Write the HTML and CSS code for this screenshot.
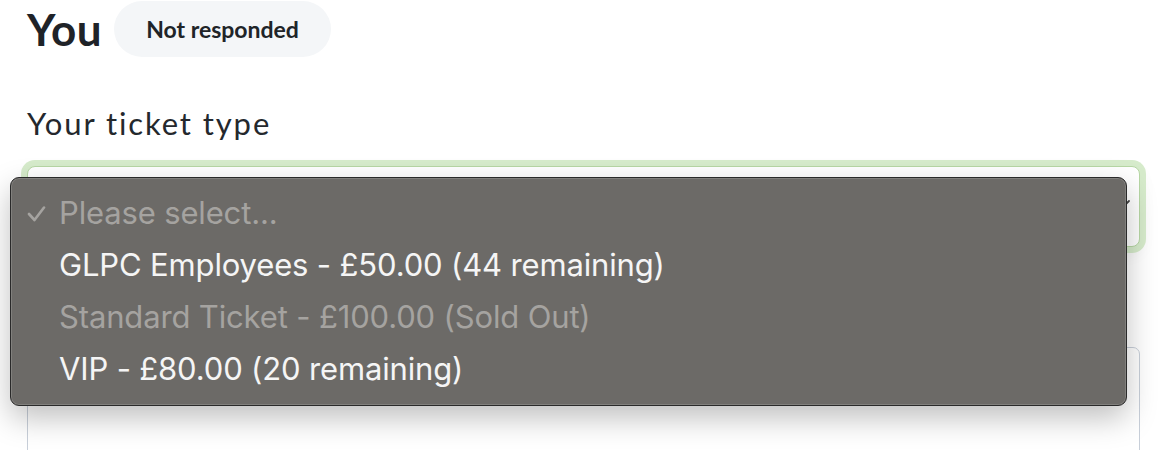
FILE: index.html
```html
<!DOCTYPE html>
<html lang="en">
<head>
<meta charset="utf-8">
<title>Ticket</title>
<link rel="stylesheet" href="styles.css">
</head>
<body>
<div class="page">
  <div class="header">
    <h1 class="name">You</h1>
    <span class="badge">Not responded</span>
  </div>
  <label class="field-label">Your ticket type</label>
  <div class="select-wrap">
    <div class="select">
      <svg class="chevron" width="14" height="10" viewBox="0 0 14 10"><path d="M2 2 L7 7 L12 2" fill="none" stroke="#444" stroke-width="1.8" stroke-linecap="round"/></svg>
    </div>
    <div class="menu">
      <div class="opt disabled"><svg class="check" width="20" height="16" viewBox="0 0 20 16"><path d="M2 8 L7.5 14 L17 1.5" fill="none" stroke="#a5a3a0" stroke-width="2.6" stroke-linecap="round" stroke-linejoin="round"/></svg>Please select...</div>
      <div class="opt">GLPC Employees - £50.00 (44 remaining)</div>
      <div class="opt disabled">Standard Ticket - £100.00 (Sold Out)</div>
      <div class="opt">VIP - £80.00 (20 remaining)</div>
    </div>
  </div>
  <div class="textarea"></div>
</div>
</body>
</html>
```

FILE: styles.css
```css
* { box-sizing: border-box; }
html, body { margin: 0; padding: 0; background: #ffffff; }
body { font-family: "Lato", "Noto Sans", sans-serif; color: #1f2328; overflow: hidden; height: 450px; }
.page { padding: 1px 32px 0 27px; width: 1172px; }
.header { display: flex; align-items: center; gap: 12px; height: 56px; }
.name { margin: 0; font-size: 44px; font-weight: 700; letter-spacing: 0.5px; line-height: 1; }
.badge { display: inline-flex; align-items: center; height: 56px; padding: 0 32px; border-radius: 28px; background: #f4f6f8; font-size: 23px; font-weight: 700; color: #202428; }
.field-label { display: block; margin-top: 47px; font-size: 31px; letter-spacing: 1.9px; line-height: 38px; color: #24282d; }
.select-wrap { position: relative; margin-top: 24px; }
.select { height: 81px; border: 1px solid #b7d7a5; border-radius: 8px; box-shadow: 0 0 0 6px #d6ebcb, 0 6px 18px rgba(0,0,0,0.06); background: #fff; position: relative; }
.chevron { position: absolute; right: 8px; top: 32px; }
.menu { position: absolute; left: -17px; top: 11px; width: 1117px; height: 229px; background: #6c6a67; border: 1px solid #2a2a2a; border-radius: 9px; box-shadow: 0 12px 30px rgba(0,0,0,0.25), inset 0 0 0 1px rgba(255,255,255,0.15); padding-top: 9px; font-family: "Inter", "Liberation Sans", sans-serif; z-index: 2; }
.opt { position: relative; height: 52px; line-height: 52px; padding-left: 48px; font-size: 31px; color: #f5f5f5; letter-spacing: -0.15px; white-space: nowrap; }
.opt.disabled { color: #a5a3a0; }
.check { position: absolute; left: 16px; top: 19px; }
.textarea { margin-top: 100px; height: 140px; border: 1px solid #c8cfd9; border-radius: 7px; }
```
